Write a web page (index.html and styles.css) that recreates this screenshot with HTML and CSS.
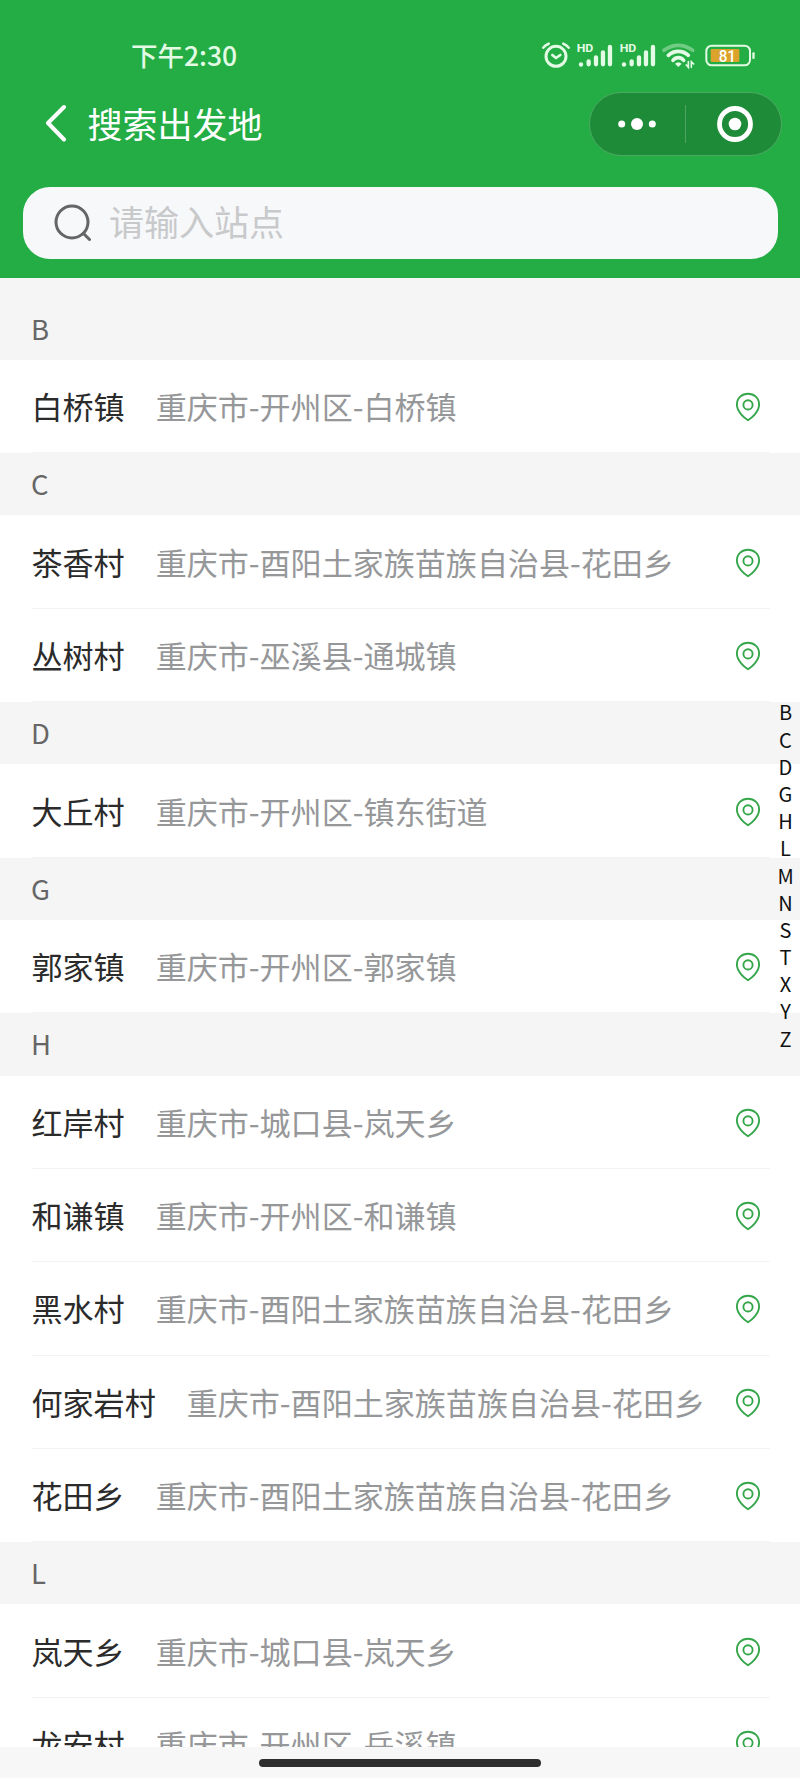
FILE: index.html
```html
<!DOCTYPE html>
<html lang="zh-CN">
<head>
<meta charset="UTF-8">
<meta name="viewport" content="width=device-width, initial-scale=1.0">
<title>搜索出发地</title>
<link rel="stylesheet" href="styles.css">
</head>
<body>
<svg width="0" height="0" class="symbols">
    <symbol id="pin" viewBox="0 0 26 30">
        <path d="M13 28.2 C9.5 26 1.900 19.800 1.900 12.600 C1.900 6 7 1.700 13 1.700 C19 1.700 24.100 6 24.100 12.600 C24.100 19.800 16.500 26 13 28.200 Z" fill="none" stroke="#36a64b" stroke-width="1.900" stroke-linejoin="round"/>
        <circle cx="13" cy="12.900" r="4.600" fill="none" stroke="#36a64b" stroke-width="1.900"/>
    </symbol>
</svg>

<div class="page">
    <header class="header">
        <div class="status-bar">
            <span class="time">下午2:30</span>
            <div class="status-icons">
                <svg class="ic-alarm" viewBox="0 0 84 78" fill="none" stroke="#e3fbe4" stroke-linecap="round" stroke-linejoin="round">
                    <circle cx="42" cy="43" r="30" stroke-width="9"/>
                    <path d="M31 39l11 9 13-9" stroke-width="8"/>
                    <path d="M4 17Q9 9 20 5M80 17Q75 9 64 5" stroke-width="8"/>
                </svg>
                <svg class="ic-signal" viewBox="0 0 106 78">
                    <path d="M12 67v1M35 67v-9M57 67v-21M78 67v-36M99 67V15" stroke="#e3fbe4" stroke-width="13" stroke-linecap="round"/>
                    <text class="hd" x="-1" y="30" textLength="50" lengthAdjust="spacingAndGlyphs">HD</text>
                </svg>
                <svg class="ic-signal" viewBox="0 0 106 78">
                    <path d="M12 67v1M35 67v-9M57 67v-21M78 67v-36M99 67V15" stroke="#e3fbe4" stroke-width="13" stroke-linecap="round"/>
                    <text class="hd" x="-1" y="30" textLength="50" lengthAdjust="spacingAndGlyphs">HD</text>
                </svg>
                <svg class="ic-wifi" viewBox="0 0 98 78" fill="none" stroke="#e3fbe4" stroke-width="11" stroke-linecap="round">
                    <path d="M6 25Q27 10 49 10T92 25" stroke-opacity=".4"/>
                    <path d="M19 40Q32 28 49 28T79 40"/>
                    <path d="M33 55Q40 47 49 47T65 55"/>
                    <path d="M39 65q10-9 20 0l-10 10z" fill="#e3fbe4" stroke="none"/>
                    <path d="M79 59v17l-6-7M88 76V59l7 7" stroke-width="5"/>
                </svg>
                <svg class="ic-battery" viewBox="0 0 150 78">
                    <rect x="4" y="11" width="131" height="59" rx="16" fill="none" stroke="#e3fbe4" stroke-width="6"/>
                    <rect x="17" y="21" width="86" height="39" rx="4" fill="#dba32c"/>
                    <rect x="142" y="31" width="7" height="20" rx="3" fill="#e3fbe4"/>
                    <text class="percent" x="41" y="59" textLength="52" lengthAdjust="spacingAndGlyphs">81</text>
                </svg>
            </div>
        </div>
        <div class="nav-bar">
            <svg class="ic-back" viewBox="0 0 22 38"><path d="M19 3L3 19l16 16.500" fill="none" stroke="#fff" stroke-width="4" stroke-linecap="round" stroke-linejoin="round"/></svg>
            <h1 class="title">搜索出发地</h1>
            <div class="capsule">
                <svg class="ic-more" viewBox="0 0 38 14" fill="#fff"><circle cx="3.700" cy="7" r="3.500"/><circle cx="19" cy="7" r="6"/><circle cx="34.300" cy="7" r="3.500"/></svg>
                <span class="capsule-line"></span>
                <svg class="ic-close" viewBox="0 0 36 36"><circle cx="18" cy="18" r="15.500" fill="none" stroke="#fff" stroke-width="4.800"/><circle cx="18" cy="18" r="6.300" fill="#fff"/></svg>
            </div>
        </div>
        <div class="search-box">
            <svg class="ic-search" viewBox="0 0 38 38" fill="none" stroke="#646567" stroke-width="3" stroke-linecap="round"><circle cx="18" cy="18" r="16"/><path d="M29.500 29.500l6 6"/></svg>
            <span class="placeholder">请输入站点</span>
        </div>
    </header>

    <main class="list">
        <div class="group first">B</div>
        <div class="item"><span class="name">白桥镇</span><span class="area">重庆市-开州区-白桥镇</span><svg class="pin"><use href="#pin"/></svg></div>

        <div class="group">C</div>
        <div class="item"><span class="name">茶香村</span><span class="area">重庆市-酉阳土家族苗族自治县-花田乡</span><svg class="pin"><use href="#pin"/></svg></div>
        <div class="item"><span class="name">丛树村</span><span class="area">重庆市-巫溪县-通城镇</span><svg class="pin"><use href="#pin"/></svg></div>

        <div class="group">D</div>
        <div class="item"><span class="name">大丘村</span><span class="area">重庆市-开州区-镇东街道</span><svg class="pin"><use href="#pin"/></svg></div>

        <div class="group">G</div>
        <div class="item"><span class="name">郭家镇</span><span class="area">重庆市-开州区-郭家镇</span><svg class="pin"><use href="#pin"/></svg></div>

        <div class="group">H</div>
        <div class="item"><span class="name">红岸村</span><span class="area">重庆市-城口县-岚天乡</span><svg class="pin"><use href="#pin"/></svg></div>
        <div class="item"><span class="name">和谦镇</span><span class="area">重庆市-开州区-和谦镇</span><svg class="pin"><use href="#pin"/></svg></div>
        <div class="item"><span class="name">黑水村</span><span class="area">重庆市-酉阳土家族苗族自治县-花田乡</span><svg class="pin"><use href="#pin"/></svg></div>
        <div class="item"><span class="name">何家岩村</span><span class="area">重庆市-酉阳土家族苗族自治县-花田乡</span><svg class="pin"><use href="#pin"/></svg></div>
        <div class="item"><span class="name">花田乡</span><span class="area">重庆市-酉阳土家族苗族自治县-花田乡</span><svg class="pin"><use href="#pin"/></svg></div>

        <div class="group">L</div>
        <div class="item"><span class="name">岚天乡</span><span class="area">重庆市-城口县-岚天乡</span><svg class="pin"><use href="#pin"/></svg></div>
        <div class="item"><span class="name">龙安村</span><span class="area">重庆市-开州区-岳溪镇</span><svg class="pin"><use href="#pin"/></svg></div>
    </main>

    <footer class="home-bar"><span class="home-line"></span></footer>

    <nav class="letters">
        <span>B</span><span>C</span><span>D</span><span>G</span><span>H</span><span>L</span><span>M</span><span>N</span><span>S</span><span>T</span><span>X</span><span>Y</span><span>Z</span>
    </nav>
</div>
</body>
</html>
```
FILE: styles.css
```css
* {
    box-sizing: border-box;
}

body {
    margin: 0;
    font-family: "Noto Sans CJK SC", "Noto Sans", sans-serif;
    background-color: #fff;
}

svg {
    display: block;
    flex-shrink: 0;
}

.symbols {
    position: absolute;
}

.page {
    position: relative;
    width: 800px;
    height: 1778px;
    display: flex;
    flex-direction: column;
    overflow: hidden;
}

/* header */
.header {
    height: 278.3px;
    flex-shrink: 0;
    padding-top: 36px;
    background-color: #23ad44;
}

.status-bar {
    display: flex;
    justify-content: space-between;
    align-items: center;
    height: 38px;
    padding: 0 45px 0 131px;
}

.time {
    color: #e3fbe4;
    font-size: 26.5px;
    line-height: 36px;
    font-weight: 500;
}

.status-icons {
    display: flex;
    align-items: center;
}

.status-icons svg {
    height: 26px;
    overflow: visible;
}

.hd {
    fill: #e3fbe4;
    font-family: Roboto, sans-serif;
    font-size: 35px;
    font-weight: 700;
}

.percent {
    fill: #fff;
    font-family: Roboto, sans-serif;
    font-size: 50px;
    font-weight: 500;
}

.ic-alarm {
    width: 28px;
    margin-right: 7px;
}

.ic-signal {
    width: 35.3px;
    margin-right: 7.3px;
}

.ic-wifi {
    width: 32.7px;
    margin-right: 10px;
}

.ic-battery {
    width: 50px;
}

.nav-bar {
    display: flex;
    align-items: center;
    height: 64px;
    margin-top: 18px;
    padding: 0 18px 0 45px;
}

.ic-back {
    width: 22px;
    height: 38px;
    margin-top: -3px;
}

.title {
    flex: 1;
    margin: -3px 0 0 20.5px;
    color: #fff;
    font-size: 35px;
    font-weight: 400;
    line-height: 64px;
}

.capsule {
    display: flex;
    align-items: center;
    width: 193px;
    height: 64px;
    padding-left: 28px;
    border: 1px solid #4ca962;
    border-radius: 32px;
    background-color: #1e8b39;
}

.ic-more {
    width: 38px;
    height: 14px;
}

.capsule-line {
    width: 1px;
    height: 38px;
    margin: 0 31px 0 29px;
    background-color: #4ea264;
}

.ic-close {
    width: 36px;
    height: 36px;
}

.search-box {
    display: flex;
    align-items: center;
    height: 72px;
    margin: 30.5px 22px 0 23px;
    padding-left: 31px;
    border-radius: 27px;
    background-color: #f7f8fa;
}

.ic-search {
    width: 38px;
    height: 38px;
}

.placeholder {
    margin: -4px 0 0 17px;
    color: #c8c9cb;
    font-size: 35px;
    line-height: 72px;
}

/* list */
.list {
    flex: 1;
    min-height: 0;
    overflow: hidden;
}

.group {
    height: 62.25px;
    padding-left: 31px;
    background-color: #f5f5f5;
    color: #666;
    font-size: 27.5px;
    line-height: 61.5px;
}

.group.first {
    height: 81.5px;
    padding-top: 19.5px;
}

.item {
    display: flex;
    align-items: center;
    height: 93.35px;
    margin: 0 30px 0 31.5px;
    padding-right: 9px;
    border-bottom: 1.5px solid #f3f3f3;
    font-size: 31.05px;
    line-height: 92px;
}

.name {
    color: #2b2b2b;
}

.area {
    flex: 1;
    margin-left: 31px;
    color: #969799;
    white-space: nowrap;
}

.pin {
    width: 26px;
    height: 30px;
    margin-top: 2px;
}

/* side index */
.letters {
    position: absolute;
    top: 698.4px;
    right: 0;
    width: 29px;
    display: flex;
    flex-direction: column;
    align-items: center;
    color: #111;
    font-size: 20px;
}

.letters span {
    height: 27.2px;
    line-height: 27.2px;
}

.home-bar {
    display: flex;
    justify-content: center;
    height: 31px;
    padding-top: 12px;
    flex-shrink: 0;
    background-color: #f7f7f7;
}

.home-line {
    width: 282px;
    height: 7.5px;
    border-radius: 4px;
    background-color: #2e2e2e;
}
```
